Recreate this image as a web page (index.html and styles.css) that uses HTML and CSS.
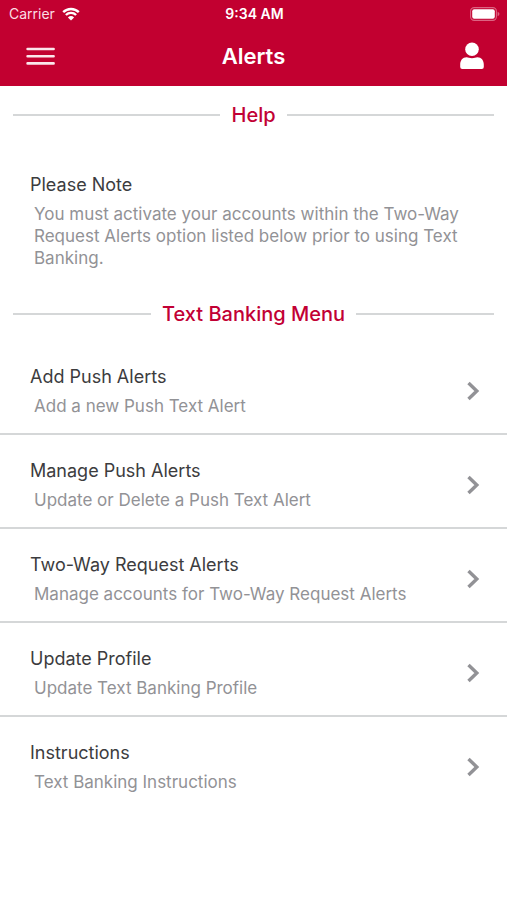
FILE: index.html
```html
<!DOCTYPE html>
<html lang="en">
<head>
<meta charset="utf-8">
<meta name="viewport" content="width=device-width, initial-scale=1">
<title>Alerts</title>
<link rel="stylesheet" href="styles.css">
</head>
<body>
<header class="header">
  <div class="status">
    <div class="carrier">
      <span>Carrier</span>
      <svg width="18" height="14" viewBox="0 0 18 14" aria-hidden="true">
        <path d="M1.2 5.1a11.2 11.2 0 0 1 15.6 0M3.9 8a7.3 7.3 0 0 1 10.2 0" fill="none" stroke="#fff" stroke-width="2.4"/>
        <path d="M9 13.6 5.9 10.5a4.5 4.5 0 0 1 6.2 0z" fill="#fff"/>
      </svg>
    </div>
    <time class="clock">9:34 AM</time>
    <svg class="battery" width="30" height="14" viewBox="0 0 30 14" aria-hidden="true">
      <rect x=".6" y=".6" width="25.8" height="12.8" rx="3.6" fill="none" stroke="#dc6482" stroke-width="1.1"/>
      <rect x="2.2" y="2.2" width="22.6" height="9.6" rx="2" fill="#fff"/>
      <path d="M27.6 4.8c2.4.8 2.4 3.6 0 4.4z" fill="#dc6482"/>
    </svg>
  </div>
  <div class="nav">
    <button class="icon-button" type="button" aria-label="Menu">
      <svg width="30" height="20" viewBox="0 0 30 20"><path d="M1.6 3h26M1.6 10.2h26M1.6 17.4h26" stroke="#fbe6eb" stroke-width="2.6" stroke-linecap="round"/></svg>
    </button>
    <h1 class="title">Alerts</h1>
    <button class="icon-button icon-button-end" type="button" aria-label="Profile">
      <svg width="24" height="28" viewBox="0 0 24 28" fill="#fff"><circle cx="12" cy="7.2" r="6.8"/><path d="M6.6 15.2c1.8 0 2.8 1 5.4 1s3.6-1 5.4-1c4 0 6.4 3.2 6.4 7.4v2.4a2 2 0 0 1-2 2H2.2a2 2 0 0 1-2-2v-2.4c0-4.2 2.4-7.400 6.400-7.400z"/></svg>
    </button>
  </div>
</header>
<main>
  <h2 class="divider">Help</h2>
  <section class="note">
    <h3 class="item-title">Please Note</h3>
    <p class="item-text">You must activate your accounts within the Two-Way Request Alerts option listed below prior to using Text Banking.</p>
  </section>
  <h2 class="divider">Text Banking Menu</h2>
  <nav class="menu" aria-label="Text Banking Menu">
    <a class="row" href="#add">
      <span class="row-body"><span class="item-title">Add Push Alerts</span><span class="item-text">Add a new Push Text Alert</span></span>
      <svg class="chevron" width="14" height="20" viewBox="0 0 14 20" aria-hidden="true"><path d="m2.5 2 8.300 8-8.300 8"/></svg>
    </a>
    <a class="row" href="#manage">
      <span class="row-body"><span class="item-title">Manage Push Alerts</span><span class="item-text">Update or Delete a Push Text Alert</span></span>
      <svg class="chevron" width="14" height="20" viewBox="0 0 14 20" aria-hidden="true"><path d="m2.5 2 8.300 8-8.300 8"/></svg>
    </a>
    <a class="row" href="#two-way">
      <span class="row-body"><span class="item-title">Two-Way Request Alerts</span><span class="item-text">Manage accounts for Two-Way Request Alerts</span></span>
      <svg class="chevron" width="14" height="20" viewBox="0 0 14 20" aria-hidden="true"><path d="m2.5 2 8.300 8-8.300 8"/></svg>
    </a>
    <a class="row" href="#profile">
      <span class="row-body"><span class="item-title">Update Profile</span><span class="item-text">Update Text Banking Profile</span></span>
      <svg class="chevron" width="14" height="20" viewBox="0 0 14 20" aria-hidden="true"><path d="m2.5 2 8.300 8-8.300 8"/></svg>
    </a>
    <a class="row" href="#instructions">
      <span class="row-body"><span class="item-title">Instructions</span><span class="item-text">Text Banking Instructions</span></span>
      <svg class="chevron" width="14" height="20" viewBox="0 0 14 20" aria-hidden="true"><path d="m2.5 2 8.300 8-8.300 8"/></svg>
    </a>
  </nav>
</main>
</body>
</html>
```
FILE: styles.css
```css
* { box-sizing: border-box; }
body {
  margin: 0;
  background: #fff;
  color: #3c3c3e;
  font-family: Inter, "Liberation Sans", sans-serif;
}
h1, h2, h3, p { margin: 0; }
.header {
  background: #c20030;
  color: #fff;
}
.status {
  display: grid;
  grid-template-columns: 1fr auto 1fr;
  align-items: center;
  height: 27px;
  padding: 0 7px 0 9px;
  font-size: 14px;
  line-height: 18px;
}
.carrier {
  display: flex;
  align-items: center;
  gap: 7px;
  color: #fbdde4;
}
.clock { font-weight: 600; }
.battery { justify-self: end; }
.nav {
  display: grid;
  grid-template-columns: 1fr auto 1fr;
  align-items: center;
  height: 59px;
  padding: 0 23px 1px;
}
.icon-button {
  display: flex;
  justify-self: start;
  padding: 0 3px;
  border: 0;
  background: none;
}
.icon-button-end {
  justify-self: end;
  padding: 0;
}
.title {
  font-size: 22px;
  line-height: 28px;
  font-weight: 600;
}
.divider {
  display: flex;
  align-items: center;
  gap: 11px;
  padding: 16px 13px;
  color: #c20034;
  font-size: 20px;
  line-height: 26px;
  font-weight: 500;
}
.divider::before,
.divider::after {
  content: "";
  flex: 1;
  height: 2px;
  background: #d5d7d8;
}
.note { padding: 28px 30px 16px; }
.item-title {
  font-size: 18px;
  line-height: 26px;
  font-weight: 400;
}
.item-text {
  padding: 5px 4px 0;
  color: #929296;
  font-size: 17px;
  line-height: 22px;
}
.row {
  display: flex;
  align-items: center;
  justify-content: space-between;
  padding: 23px 27px 16px 30px;
  border-bottom: 2px solid #d5d7d8;
  color: inherit;
  text-decoration: none;
}
.row:first-child { padding-top: 21px; }
.row:last-child { border-bottom: 0; }
.row-body {
  display: flex;
  flex-direction: column;
}
.chevron {
  fill: none;
  stroke: #929296;
  stroke-width: 3.4;
}
```
